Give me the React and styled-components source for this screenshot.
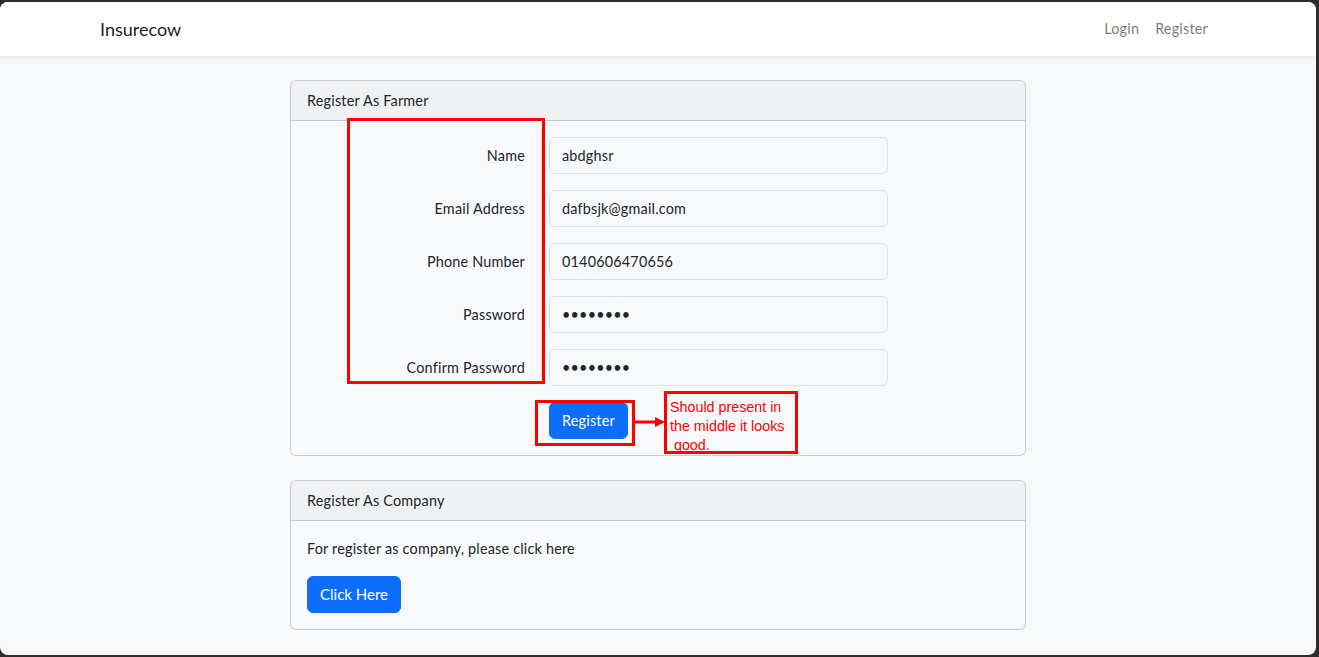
import React from 'react';
import styled, { createGlobalStyle } from 'styled-components';

const GlobalStyle = createGlobalStyle`
  html, body {
    margin: 0;
    padding: 0;
    background: #2e2e2e;
  }
  body {
    font-family: Lato, "Open Sans", sans-serif;
    font-size: 14.4px;
    line-height: 1.6;
    letter-spacing: 0.2px;
    color: #212529;
  }
  * { box-sizing: border-box; }
`;

const Window = styled.div`
  margin: 2px 3px 0 0;
  height: 653px;
  background: #f8f9fa;
  border-radius: 8px;
  overflow: hidden;
`;

const Navbar = styled.nav`
  height: 54px;
  background: #fff;
  box-shadow: 0 2px 4px rgba(0, 0, 0, 0.075);
  display: flex;
  align-items: center;
`;

const Container = styled.div`
  width: 1140px;
  margin: 0 auto;
  padding: 0 12px;
`;

const NavInner = styled(Container)`
  display: flex;
  align-items: center;
  justify-content: space-between;
`;

const Brand = styled.a`
  font-size: 18px;
  letter-spacing: 0;
  color: rgba(0, 0, 0, 0.9);
  text-decoration: none;
`;

const NavLinks = styled.div`
  display: flex;
`;

const NavLink = styled.a`
  padding: 8px;
  color: rgba(0, 0, 0, 0.55);
  text-decoration: none;
`;

const Main = styled.main`
  padding: 24px 0;
`;

const Column = styled.div`
  width: 736px;
  margin: 0 auto;
  display: flex;
  flex-direction: column;
  gap: 24px;
`;

const Card = styled.div`
  position: relative;
  border: 1px solid rgba(0, 0, 0, 0.175);
  border-radius: 6px;
  background: #f8f9fa;
`;

const CardHeader = styled.div`
  padding: 8px 16px;
  background: rgba(0, 0, 0, 0.03);
  border-bottom: 1px solid rgba(0, 0, 0, 0.175);
  border-radius: 5px 5px 0 0;
`;

const CardBody = styled.div`
  padding: 16px;
`;

const FormRow = styled.div`
  display: grid;
  grid-template-columns: 4fr 6fr 2fr;
  margin: 0 -12px ${p => (p.$last ? '0' : '16px')};
  & > * {
    margin-left: 12px;
    margin-right: 12px;
  }
`;

const Label = styled.label`
  text-align: right;
  padding-top: 7px;
  padding-bottom: 7px;
`;

const Input = styled.input`
  display: block;
  width: calc(100% - 24px);
  padding: 6px 12px;
  font-family: inherit;
  font-size: 14.4px;
  line-height: 1.6;
  letter-spacing: 0.2px;
  color: #212529;
  background: #f8f9fa;
  border: 1px solid #dee2e6;
  border-radius: 6px;
  outline: none;
`;

const Button = styled.button`
  justify-self: start;
  grid-column: ${p => p.$col || 'auto'};
  padding: 6px 12px;
  font-family: inherit;
  font-size: ${p => (p.$big ? '15px' : '14.4px')};
  letter-spacing: ${p => (p.$big ? '0' : '0.2px')};
  line-height: 23px;
  color: #fff;
  background: #0d6efd;
  border: 1px solid #0d6efd;
  border-radius: 6px;
`;

const Text = styled.p`
  margin: 0 0 16px;
`;

const Mark = styled.div`
  position: absolute;
  border: 3px solid #ff0000;
  pointer-events: none;
`;

const Note = styled(Mark)`
  padding: 4px 2px 0 3px;
  font-family: "Liberation Sans", sans-serif;
  font-size: 14.3px;
  line-height: 19px;
  letter-spacing: 0;
  white-space: pre;
  color: #ff0000;
  background: #f8f9fa;
`;

const Arrow = styled.svg`
  position: absolute;
  overflow: visible;
`;

const fields = [
  { label: 'Name', type: 'text', value: 'abdghsr' },
  { label: 'Email Address', type: 'email', value: 'dafbsjk@gmail.com' },
  { label: 'Phone Number', type: 'text', value: '0140606470656' },
  { label: 'Password', type: 'password', value: '12345678' },
  { label: 'Confirm Password', type: 'password', value: '12345678' },
];

export default function App() {
  return (
    <>
      <GlobalStyle />
      <Window>
        <Navbar>
          <NavInner>
            <Brand href="#">Insurecow</Brand>
            <NavLinks>
              <NavLink href="#">Login</NavLink>
              <NavLink href="#">Register</NavLink>
            </NavLinks>
          </NavInner>
        </Navbar>

        <Main>
          <Column>
            <Card>
              <CardHeader>Register As Farmer</CardHeader>
              <CardBody>
                {fields.map(f => (
                  <FormRow key={f.label}>
                    <Label>{f.label}</Label>
                    <Input type={f.type} defaultValue={f.value} readOnly />
                  </FormRow>
                ))}
                <FormRow $last>
                  <Button $col="2">Register</Button>
                </FormRow>
              </CardBody>

              {/* annotations */}
              <Mark style={{ left: 56, top: 37, width: 198, height: 266 }} />
              <Mark style={{ left: 244, top: 319, width: 100, height: 46 }} />
              <Arrow style={{ left: 344, top: 340 }} width="30" height="2">
                <line x1="0" y1="1" x2="22" y2="1" stroke="#ff0000" strokeWidth="3" />
                <polygon points="20,-4 30,1 20,6" fill="#ff0000" />
              </Arrow>
              <Note style={{ left: 373, top: 310, width: 134, height: 63 }}>
                {'Should present in\nthe middle it looks\n good.'}
              </Note>
            </Card>

            <Card>
              <CardHeader>Register As Company</CardHeader>
              <CardBody>
                <Text>For register as company, please click here</Text>
                <Button $big>Click Here</Button>
              </CardBody>
            </Card>
          </Column>
        </Main>
      </Window>
    </>
  );
}
